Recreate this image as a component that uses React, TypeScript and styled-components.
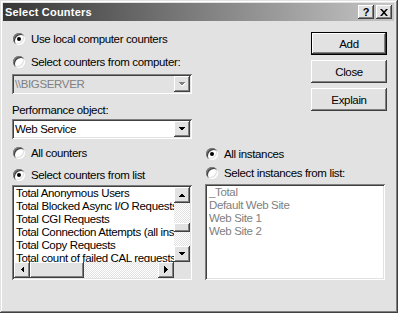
import React from 'react';
import styled, { createGlobalStyle, css } from 'styled-components';

const face = '#e2e2e2';

const GlobalStyle = createGlobalStyle`
  html, body {
    margin: 0;
    padding: 0;
    background: ${face};
  }
  body {
    font-family: "Liberation Sans", Arial, sans-serif;
    font-size: 11.5px;
    letter-spacing: -0.35px;
    color: #000;
  }
`;

const raised = css`
  background: ${face};
  box-shadow: inset -1px -1px #404040, inset 1px 1px #ffffff,
    inset -2px -2px #808080, inset 2px 2px ${face};
`;

const sunken = css`
  box-shadow: inset 1px 1px #808080, inset -1px -1px #ffffff,
    inset 2px 2px #404040, inset -2px -2px ${face};
  padding: 2px;
`;

const Window = styled.div`
  box-sizing: border-box;
  width: 398px;
  height: 313px;
  padding: 3px;
  background: ${face};
  box-shadow: inset -1px -1px #404040, inset 1px 1px ${face},
    inset -2px -2px #808080, inset 2px 2px #ffffff;
  display: flex;
  flex-direction: column;
`;

const TitleBar = styled.div`
  height: 18px;
  margin-right: 1px;
  display: flex;
  align-items: center;
  justify-content: space-between;
  background: linear-gradient(to right, #363636, #c6c6c6);
  padding: 0 2px;
`;

const TitleText = styled.span`
  color: #fff;
  font-weight: bold;
  font-size: 11px;
  letter-spacing: 0.2px;
`;

const CaptionButtons = styled.div`
  display: flex;
  gap: 2px;
`;

const CaptionButton = styled.div`
  ${raised};
  width: 16px;
  height: 14px;
  display: flex;
  align-items: center;
  justify-content: center;
  font-weight: bold;
  font-size: 11px;
  line-height: 14px;
  letter-spacing: 0;
`;

const Body = styled.div`
  padding: 10px 8px 0 9px;
  display: flex;
  flex-direction: column;
`;

const TopSection = styled.div`
  display: flex;
  justify-content: space-between;
  align-items: flex-start;
`;

const LeftColumn = styled.div`
  width: 180px;
  display: flex;
  flex-direction: column;
`;

const ButtonColumn = styled.div`
  margin-top: 1px;
  width: 76px;
  display: flex;
  flex-direction: column;
  gap: 5px;
`;

const PushButton = styled.div<{ $default?: boolean }>`
  box-sizing: border-box;
  height: 23px;
  display: flex;
  align-items: center;
  justify-content: center;
  background: ${face};
  ${({ $default }) =>
    $default
      ? css`
          border: 1px solid #000;
          box-shadow: inset -1px -1px #404040, inset 1px 1px #ffffff,
            inset -2px -2px #808080;
        `
      : css`
          box-shadow: inset -1px -1px #404040, inset 1px 1px #ffffff,
            inset -2px -2px #808080, inset 2px 2px ${face};
        `}
`;

const RadioRow = styled.label<{ $mt?: number }>`
  margin-top: ${({ $mt }) => $mt ?? 0}px;
  height: 16px;
  padding-left: 1px;
  display: flex;
  align-items: center;
  gap: 6px;
  line-height: 13px;
  white-space: nowrap;
`;

const RadioMark = styled.span<{ $checked?: boolean }>`
  position: relative;
  width: 12px;
  height: 12px;
  border-radius: 50%;
  background: #fff;
  box-shadow: inset 1px 1px #808080, inset -1px -1px #ffffff,
    inset 2px 2px #404040, inset -2px -2px ${face};
  flex: none;

  &::after {
    content: '';
    display: ${({ $checked }) => ($checked ? 'block' : 'none')};
    position: absolute;
    left: 4px;
    top: 4px;
    width: 4px;
    height: 4px;
    border-radius: 50%;
    background: #000;
  }
`;

const ComboBox = styled.div<{ $mt: number; $disabled?: boolean }>`
  ${sunken};
  box-sizing: border-box;
  margin-top: ${({ $mt }) => $mt}px;
  height: 20px;
  display: flex;
  align-items: center;
  background: ${({ $disabled }) => ($disabled ? face : '#fff')};
  color: ${({ $disabled }) => ($disabled ? '#808080' : '#000')};
`;

const ComboText = styled.span`
  flex: 1;
  padding-left: 1px;
  line-height: 13px;
`;

const DropButton = styled.div`
  ${raised};
  width: 16px;
  height: 16px;
  display: flex;
  align-items: center;
  justify-content: center;
`;

const FieldLabel = styled.div<{ $mt: number }>`
  margin-top: ${({ $mt }) => $mt}px;
  line-height: 13px;
`;

const BottomSection = styled.div`
  display: grid;
  grid-template-columns: 180px 180px;
  column-gap: 13px;
`;

const Column = styled.div`
  display: flex;
  flex-direction: column;
`;

const ListBox = styled.div<{ $mt: number; $h: number }>`
  ${sunken};
  box-sizing: border-box;
  margin-top: ${({ $mt }) => $mt}px;
  height: ${({ $h }) => $h}px;
  background: #fff;
  display: grid;
  grid-template-columns: 1fr 16px;
  grid-template-rows: 1fr 16px;
  overflow: hidden;
`;

const Items = styled.div`
  overflow: hidden;
  padding-left: 2px;
`;

const Item = styled.div<{ $muted?: boolean }>`
  height: 13px;
  line-height: 13px;
  white-space: nowrap;
  color: ${({ $muted }) => ($muted ? '#808080' : '#000')};
`;

const InstanceList = styled.div<{ $mt: number; $h: number }>`
  ${sunken};
  box-sizing: border-box;
  margin-top: ${({ $mt }) => $mt}px;
  height: ${({ $h }) => $h}px;
  background: #fff;
  padding-left: 4px;
`;

const checker = css`
  background-color: #fff;
  background-image: repeating-conic-gradient(${face} 0% 25%, #ffffff 0% 50%);
  background-size: 2px 2px;
`;

const VScroll = styled.div`
  display: flex;
  flex-direction: column;
`;

const HScroll = styled.div`
  display: flex;
`;

const Track = styled.div<{ $vertical?: boolean }>`
  ${checker};
  flex: 1;
  display: flex;
  flex-direction: ${({ $vertical }) => ($vertical ? 'column' : 'row')};
`;

const Thumb = styled.div<{ $w: number; $h: number; $offset?: number }>`
  ${raised};
  flex: none;
  width: ${({ $w }) => $w}px;
  height: ${({ $h }) => $h}px;
  margin-top: ${({ $offset }) => $offset ?? 0}px;
`;

const ScrollButton = styled.div`
  ${raised};
  flex: none;
  width: 16px;
  height: 16px;
  display: flex;
  align-items: center;
  justify-content: center;
`;

const Corner = styled.div`
  background: ${face};
`;

type Dir = 'up' | 'down' | 'left' | 'right';

const Arrow: React.FC<{ dir: Dir; muted?: boolean }> = ({ dir, muted }) => {
  const pts: Record<Dir, string> = {
    up: '0,4 7,4 3.5,0.5',
    down: '0,0 7,0 3.5,3.5',
    left: '4,0 4,7 0.5,3.5',
    right: '0,0 0,7 3.5,3.5',
  };
  const vertical = dir === 'up' || dir === 'down';
  const w = vertical ? 7 : 4;
  const h = vertical ? 4 : 7;
  return (
    <svg width={w + 1} height={h + 1} viewBox={`0 0 ${w + 1} ${h + 1}`}>
      {muted && <polygon points={pts[dir]} fill="#fff" transform="translate(1,1)" />}
      <polygon points={pts[dir]} fill={muted ? '#808080' : '#000'} shapeRendering="crispEdges" />
    </svg>
  );
};

const CloseGlyph = () => (
  <svg width="8" height="7" viewBox="0 0 8 7">
    <path d="M0 0h2l2 2.2L6 0h2L5 3.5 8 7H6L4 4.8 2 7H0l3-3.5z" fill="#000" />
  </svg>
);

const counters = [
  'Total Anonymous Users',
  'Total Blocked Async I/O Requests',
  'Total CGI Requests',
  'Total Connection Attempts (all instances)',
  'Total Copy Requests',
  'Total count of failed CAL requests',
];

const instances = ['_Total', 'Default Web Site', 'Web Site 1', 'Web Site 2'];

const Radio: React.FC<{ checked?: boolean; mt?: number; children: React.ReactNode }> = ({
  checked,
  mt,
  children,
}) => (
  <RadioRow $mt={mt}>
    <RadioMark $checked={checked} />
    {children}
  </RadioRow>
);

export default function App() {
  return (
    <>
      <GlobalStyle />
      <Window>
        <TitleBar>
          <TitleText>Select Counters</TitleText>
          <CaptionButtons>
            <CaptionButton>?</CaptionButton>
            <CaptionButton>
              <CloseGlyph />
            </CaptionButton>
          </CaptionButtons>
        </TitleBar>
        <Body>
          <TopSection>
            <LeftColumn>
              <Radio checked>Use local computer counters</Radio>
              <Radio mt={7}>Select counters from computer:</Radio>
              <ComboBox $mt={4} $disabled>
                <ComboText>\\BIGSERVER</ComboText>
                <DropButton>
                  <Arrow dir="down" muted />
                </DropButton>
              </ComboBox>
              <FieldLabel $mt={10}>Performance object:</FieldLabel>
              <ComboBox $mt={2}>
                <ComboText>Web Service</ComboText>
                <DropButton>
                  <Arrow dir="down" />
                </DropButton>
              </ComboBox>
            </LeftColumn>
            <ButtonColumn>
              <PushButton $default>Add</PushButton>
              <PushButton>Close</PushButton>
              <PushButton>Explain</PushButton>
            </ButtonColumn>
          </TopSection>
          <BottomSection>
            <Column>
              <Radio mt={6}>All counters</Radio>
              <Radio mt={6} checked>
                Select counters from list
              </Radio>
              <ListBox $mt={2} $h={95}>
                <Items>
                  {counters.map((c) => (
                    <Item key={c}>{c}</Item>
                  ))}
                </Items>
                <VScroll>
                  <ScrollButton>
                    <Arrow dir="up" />
                  </ScrollButton>
                  <Track $vertical>
                    <Thumb $w={16} $h={9} $offset={20} />
                  </Track>
                  <ScrollButton>
                    <Arrow dir="down" />
                  </ScrollButton>
                </VScroll>
                <HScroll>
                  <ScrollButton>
                    <Arrow dir="left" />
                  </ScrollButton>
                  <Track>
                    <Thumb $w={54} $h={16} />
                  </Track>
                  <ScrollButton>
                    <Arrow dir="right" />
                  </ScrollButton>
                </HScroll>
                <Corner />
              </ListBox>
            </Column>
            <Column>
              <Radio mt={7} checked>
                All instances
              </Radio>
              <Radio mt={3}>Select instances from list:</Radio>
              <InstanceList $mt={3} $h={96}>
                {instances.map((i) => (
                  <Item key={i} $muted>
                    {i}
                  </Item>
                ))}
              </InstanceList>
            </Column>
          </BottomSection>
        </Body>
      </Window>
    </>
  );
}
